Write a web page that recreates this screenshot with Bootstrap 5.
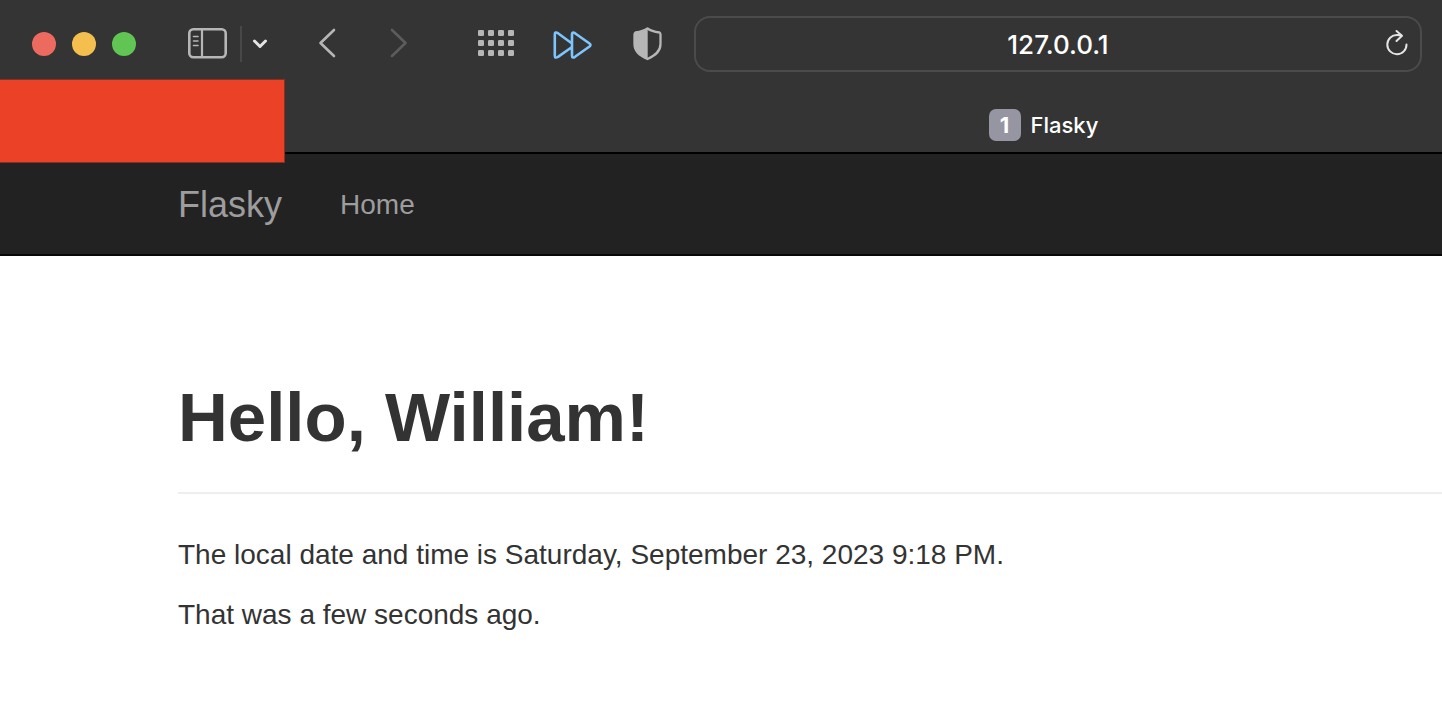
<!DOCTYPE html>
<html lang="en">
<head>
<meta charset="utf-8">
<meta name="viewport" content="width=device-width, initial-scale=1">
<title>Flasky</title>
<link rel="stylesheet" href="https://cdn.jsdelivr.net/npm/bootstrap@5.3.0/dist/css/bootstrap.min.css">
<style>
  body { font-family: "Liberation Sans", Arial, sans-serif; font-size: 28px; line-height: 40px; color: #333; background: #fff; overflow-x: hidden; }
  svg { display: block; }
  .browser-chrome { z-index: 2; background: #343434; border-bottom: 2px solid #000; font-family: Inter, sans-serif; color: #fff; }
  .toolbar { height: 88px; padding: 0 20px 0 32px; }
  .toolbar button { padding: 0; border: 0; background: none; color: #b6b6b6; flex: none; }
  .lights { gap: 16px; margin-right: 52px; }
  .toolbar .light { width: 24px; height: 24px; border-radius: 50%; }
  .toolbar .light-close { background: #ed6a5e; }
  .toolbar .light-min { background: #f5bf4f; }
  .toolbar .light-max { background: #61c554; }
  .sidebar-tools { gap: 10px; margin-right: 50px; }
  .divider { width: 2px; height: 36px; margin-left: 3px; background: #484848; }
  .toolbar .btn-chevron { color: #e4e4e4; }
  .history-tools { gap: 52px; margin-right: 68px; }
  .toolbar .btn-forward { color: #5c5c5c; }
  .extension-tools { gap: 38px; margin-right: 30px; }
  .toolbar .btn-skip { color: #7cc5ff; }
  .address-field { height: 56px; border: 2px solid #4b4b4b; border-radius: 16px; background: transparent; color: #fff; font-size: 26px; font-weight: 500; }
  .address-field:focus { background: transparent; color: #fff; }
  .toolbar .btn-reload { position: absolute; right: 12px; top: 12px; color: #e4e4e4; }
  .tab-row { height: 64px; padding: 21px 4px 0 45%; }
  .page-tab { gap: 10px; color: #fff; font-size: 22px; line-height: 32px; font-weight: 500; }
  .tab-count { width: 32px; height: 32px; border-radius: 7px; background: #9695a2; font-weight: 700; }
  .redaction { position: absolute; left: 0; top: 80px; width: 284px; height: 82px; background: #eb4127; outline: 1px solid #86301f; }
  .site-nav { height: 102px; padding: 2px 0 0 178px; background: #222; border-bottom: 2px solid #080808; }
  .site-nav .navbar-brand { font-size: 36px; line-height: 40px; padding: 0; margin-right: 50px; color: #9d9d9d; }
  .site-nav .nav-link { padding: 0; color: #9d9d9d; }
  .page-body { padding: 123px 0 54px 178px; }
  .page-title { margin: 0 0 41px; padding-bottom: 35px; border-bottom: 2px solid #eee; }
  .page-title h1 { margin: 0; font-size: 69px; line-height: 78px; font-weight: 700; }
  .page-body p { margin: 0 0 20px; }
</style>
</head>
<body>
<header class="browser-chrome position-relative">
  <div class="toolbar d-flex align-items-center">
    <div class="lights d-flex">
      <button type="button" class="light light-close" aria-label="Close"></button>
      <button type="button" class="light light-min" aria-label="Minimize"></button>
      <button type="button" class="light light-max" aria-label="Zoom"></button>
    </div>
    <div class="sidebar-tools d-flex align-items-center">
      <button type="button" aria-label="Sidebar">
        <svg width="39" height="32" viewBox="0 0 39 32" fill="none" stroke="currentColor"><rect x="1.3" y="1.3" width="36.4" height="28" rx="4" stroke-width="2.6"/><path d="M14 1v28" stroke-width="2.2"/><path d="M5.5 8.5h4.500M5.500 13h4.500M5.500 17.500h4.500" stroke-width="1.600" stroke-linecap="round"/></svg>
      </button>
      <span class="divider"></span>
      <button type="button" class="btn-chevron" aria-label="Tab groups">
        <svg width="16" height="12" viewBox="0 0 16 12" fill="none" stroke="currentColor" stroke-width="3" stroke-linecap="round" stroke-linejoin="round"><path d="M2.500 3l5.500 5.500L13.500 3"/></svg>
      </button>
    </div>
    <div class="history-tools d-flex">
      <button type="button" aria-label="Back">
        <svg width="20" height="32" viewBox="0 0 20 32" fill="none" stroke="currentColor" stroke-width="2.600" stroke-linecap="round" stroke-linejoin="round"><path d="M16 2L2.500 15L16 28"/></svg>
      </button>
      <button type="button" class="btn-forward" aria-label="Forward">
        <svg width="20" height="32" viewBox="0 0 20 32" fill="none" stroke="currentColor" stroke-width="2.600" stroke-linecap="round" stroke-linejoin="round"><path d="M2 2l13.500 13L2 28"/></svg>
      </button>
    </div>
    <div class="extension-tools d-flex align-items-center">
      <button type="button" aria-label="Keypad">
        <svg width="37" height="28" viewBox="0 0 37 28" fill="currentColor"><defs><g id="dots"><rect x="0" width="6" height="6" rx="1.300"/><rect x="10" width="6" height="6" rx="1.300"/><rect x="20" width="6" height="6" rx="1.300"/><rect x="30" width="6" height="6" rx="1.300"/></g></defs><use href="#dots"/><use href="#dots" y="10"/><use href="#dots" y="20"/></svg>
      </button>
      <button type="button" class="btn-skip" aria-label="Skip forward">
        <svg width="42" height="34" viewBox="0 0 42 34" fill="none" stroke="currentColor" stroke-width="2.600" stroke-linejoin="round"><path d="M19 16V7.500Q19 4.300 22 6.200L36.500 16.500Q38.500 18 36.500 19.500L22 29.800Q19 31.700 19 28.500V20L5 29.900Q1.800 31.700 1.800 28.500V7.500Q1.800 4.300 5 6.200L19 16.500V20"/></svg>
      </button>
      <button type="button" aria-label="Privacy report">
        <svg width="31" height="34" viewBox="0 0 31 34"><path d="M14.500 1.500C11 4 6 5 2.500 5.500Q1.500 6 1.500 7.500V17C1.500 24 6 28 14.500 32C23 28 27.500 24 27.500 17V7.500Q27.500 6 26.500 5.500C23 5 18 4 14.500 1.500Z" fill="none" stroke="currentColor" stroke-width="2.300" stroke-linejoin="round"/><path d="M14.700 1.500C11 4 6 5 2.500 5.500Q1.500 6 1.500 7.500V17C1.500 24 6 28 14.700 32Z" fill="currentColor"/></svg>
      </button>
    </div>
    <div class="position-relative flex-grow-1">
      <input type="text" class="address-field form-control text-center shadow-none" value="127.0.0.1" aria-label="Address">
      <button type="button" class="btn-reload" aria-label="Reload">
        <svg width="24" height="30" viewBox="0 0 24 30" fill="none" stroke="currentColor" stroke-width="2" stroke-linecap="round" stroke-linejoin="round"><path d="M20.500 16.500A9.600 9.600 0 1 1 11 7Q13.500 7 16 7.800M10.500 3L16 7.800L10.500 13"/></svg>
      </button>
    </div>
  </div>
  <div class="tab-row">
    <a href="#" class="page-tab d-flex align-items-center justify-content-center text-decoration-none"><span class="tab-count text-center">1</span>Flasky</a>
  </div>
  <div class="redaction"></div>
</header>
<nav class="site-nav navbar navbar-expand justify-content-start">
  <a class="navbar-brand" href="#">Flasky</a>
  <ul class="navbar-nav"><li class="nav-item"><a class="nav-link" href="#">Home</a></li></ul>
</nav>
<main class="page-body">
  <div class="page-title"><h1>Hello, William!</h1></div>
  <p>The local date and time is Saturday, September 23, 2023 9:18 PM.</p>
  <p>That was a few seconds ago.</p>
</main>
<script src="https://cdn.jsdelivr.net/npm/bootstrap@5.3.0/dist/js/bootstrap.bundle.min.js"></script>
</body>
</html>
